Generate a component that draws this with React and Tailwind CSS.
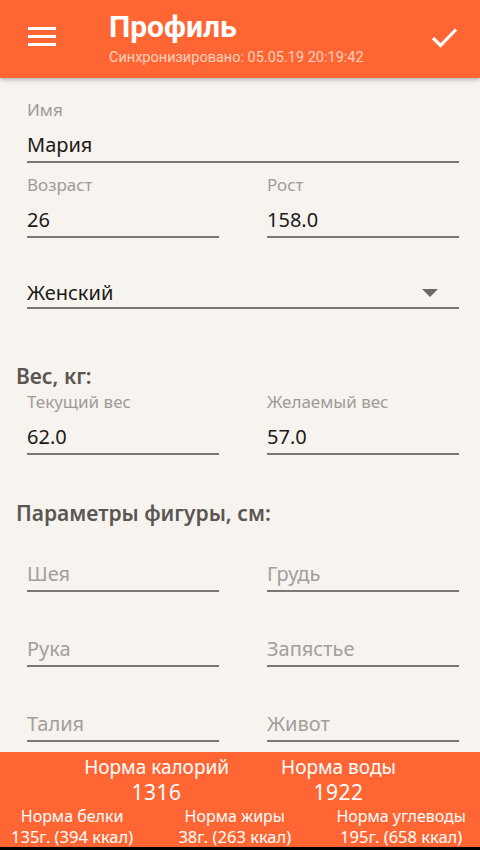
import React from 'react';

const Field = ({ label, value, placeholder, className = '' }) => (
  <div className={className}>
    {label && <div className="h-5 leading-5 text-[17px] text-[#a09b97]">{label}</div>}
    <div
      className={`${label ? 'mt-[10px]' : ''} h-[33px] leading-[30px] text-[20px] border-b-2 border-[#7d7773] ${
        value ? 'text-[#1c1a19]' : 'text-[#a39e9a]'
      }`}
    >
      {value || placeholder}
    </div>
  </div>
);

const Norm = ({ title, value }) => (
  <div className="text-center">
    <div className="leading-[20px] text-[16px]">{title}</div>
    <div className="leading-[20px] text-[16.5px] mt-[1px]">{value}</div>
  </div>
);

export default function App() {
  return (
    <div
      className="w-[480px] h-[850px] flex flex-col bg-[#f7f3ef] overflow-hidden"
      style={{ fontFamily: '"Noto Sans", "Open Sans", sans-serif' }}
    >
      <header className="h-[78px] shrink-0 bg-[#ff6634] flex items-start relative z-10 shadow-[0_2px_4px_rgba(0,0,0,0.25)]">
        <div className="w-[109px] pt-[27px] pl-[28px]">
          <div className="w-[28px] flex flex-col gap-[5px]">
            <span className="h-[3px] bg-white block"></span>
            <span className="h-[3px] bg-white block"></span>
            <span className="h-[3px] bg-white block"></span>
          </div>
        </div>
        <div className="flex-1 pt-[9px]" style={{ fontFamily: 'Roboto, "Noto Sans", sans-serif' }}>
          <div className="text-white font-bold text-[30px] leading-[36px]">Профиль</div>
          <div className="text-[#ffd0bd] text-[14.5px] leading-[18px] mt-[4px]">
            Синхронизировано: 05.05.19 20:19:42
          </div>
        </div>
        <div className="pt-[27px] pr-[22px]">
          <svg width="27" height="21" viewBox="0 0 27 21" fill="none">
            <path d="M2 11 L9.5 18.5 L25 2.5" stroke="white" strokeWidth="3.2" />
          </svg>
        </div>
      </header>

      <main className="flex-1 overflow-hidden pl-[27px] pr-[21px]">
        <Field label="Имя" value="Мария" className="mt-[22px]" />

        <div className="grid grid-cols-2 gap-x-12 mt-[12px]">
          <Field label="Возраст" value="26" />
          <Field label="Рост" value="158.0" />
        </div>

        <div className="mt-[41px] h-[30px] border-b-2 border-[#7d7773] flex items-center justify-between">
          <span className="text-[20px] leading-[28px] text-[#1c1a19]">Женский</span>
          <svg width="16" height="8" viewBox="0 0 16 8" className="mr-[21px]">
            <path d="M0 0 H16 L8 8 Z" fill="#6e6864" />
          </svg>
        </div>

        <div className="-ml-[11px] mt-[55px] text-[21px] leading-[24px] font-semibold text-[#5b5652]">Вес, кг:</div>
        <div className="grid grid-cols-2 gap-x-12 mt-[4px]">
          <Field label="Текущий вес" value="62.0" />
          <Field label="Желаемый вес" value="57.0" />
        </div>

        <div className="-ml-[11px] mt-[46px] text-[21px] leading-[24px] font-semibold text-[#5b5652]">
          Параметры фигуры, см:
        </div>
        <div className="grid grid-cols-2 gap-x-12 gap-y-[42px] mt-[34px]">
          <Field placeholder="Шея" />
          <Field placeholder="Грудь" />
          <Field placeholder="Рука" />
          <Field placeholder="Запястье" />
          <Field placeholder="Талия" />
          <Field placeholder="Живот" />
        </div>
      </main>

      <footer className="h-[95px] shrink-0 bg-[#ff6634] text-white pt-[4px]">
        <div className="flex justify-center gap-[52px]">
          <div className="text-center">
            <div className="text-[19px] leading-[22px]">Норма калорий</div>
            <div className="text-[21px] leading-[22px] mt-[3px] tracking-wide">1316</div>
          </div>
          <div className="text-center">
            <div className="text-[19px] leading-[22px]">Норма воды</div>
            <div className="text-[21px] leading-[22px] mt-[3px] tracking-wide">1922</div>
          </div>
        </div>
        <div className="flex justify-between mt-[3px] pl-[11px] pr-[14px]">
          <Norm title="Норма белки" value="135г. (394 ккал)" />
          <Norm title="Норма жиры" value="38г. (263 ккал)" />
          <Norm title="Норма углеводы" value="195г. (658 ккал)" />
        </div>
      </footer>
      <div className="h-[3px] shrink-0 bg-black"></div>
    </div>
  );
}
